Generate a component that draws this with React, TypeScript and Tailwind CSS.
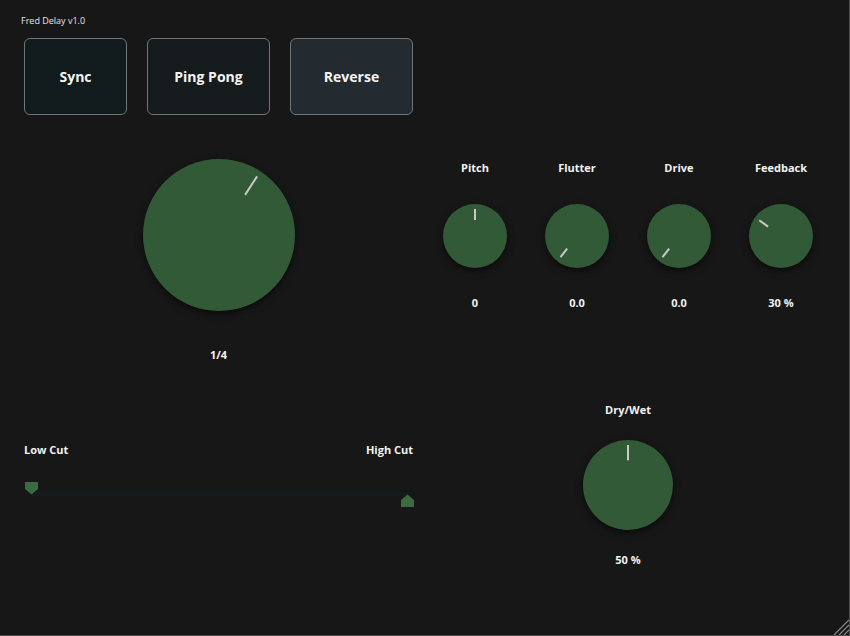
import React from "react";

const FONT = { fontFamily: '"Open Sans", "DejaVu Sans", sans-serif' };

function Knob({ size, angle, r0, r1 }: { size: number; angle: number; r0: number; r1: number }) {
  const c = size / 2;
  const a = (angle * Math.PI) / 180;
  const x1 = c + Math.sin(a) * r0 * c;
  const y1 = c - Math.cos(a) * r0 * c;
  const x2 = c + Math.sin(a) * r1 * c;
  const y2 = c - Math.cos(a) * r1 * c;
  return (
    <div
      className="rounded-full bg-[#335a37] shadow-[0_3px_7px_rgba(0,0,0,0.55)] shrink-0"
      style={{ width: size, height: size }}
    >
      <svg width={size} height={size} className="block">
        <line x1={x1} y1={y1} x2={x2} y2={y2} stroke="#c9c9c9" strokeWidth={2} />
      </svg>
    </div>
  );
}

function SmallKnob({ label, value, angle }: { label: string; value: string; angle: number }) {
  return (
    <div className="w-[102px] flex flex-col items-center">
      <div className="text-[11px] leading-[14px] font-bold text-[#f2f2f2]">{label}</div>
      <div className="mt-[29px]">
        <Knob size={64} angle={angle} r0={0.5} r1={0.84} />
      </div>
      <div className="mt-[28px] text-[11px] leading-[14px] font-bold text-[#f2f2f2]">{value}</div>
    </div>
  );
}

export default function App() {
  return (
    <div
      className="relative w-[850px] h-[636px] bg-[#171717] border-r border-b border-[#4e4e4e] flex flex-col overflow-hidden"
      style={FONT}
    >
      <div className="pt-[15px] pl-[21px] text-[9px] leading-[11px] text-[#e6e6e6]">Fred Delay v1.0</div>
      <div className="mt-[12px] ml-[24px] flex gap-[20px]">
        <div className="w-[103px] h-[77px] rounded-[6px] border border-[#6f7579] bg-[#111a1d] flex items-center justify-center text-[14px] font-bold text-[#f4f4f4]">
          Sync
        </div>
        <div className="w-[123px] h-[77px] rounded-[6px] border border-[#6f7579] bg-[#161b1e] flex items-center justify-center text-[14px] font-bold text-[#f4f4f4]">
          Ping Pong
        </div>
        <div className="w-[123px] h-[77px] rounded-[6px] border border-[#6f7579] bg-[#232a30] flex items-center justify-center text-[14px] font-bold text-[#f4f4f4]">
          Reverse
        </div>
      </div>
      <div className="flex">
        <div className="ml-[24px] w-[389px] flex flex-col">
          <div className="mt-[44px] flex justify-center">
            <Knob size={152} angle={33} r0={0.63} r1={0.92} />
          </div>
          <div className="mt-[37px] text-center text-[11px] leading-[14px] font-bold text-[#f2f2f2]">1/4</div>
          <div className="mt-[81px] flex justify-between text-[11px] leading-[14px] font-bold text-[#f2f2f2]">
            <span>Low Cut</span>
            <span>High Cut</span>
          </div>
          <div className="mt-[25px] relative h-[26px]">
            <div className="absolute left-[8px] right-[3px] top-[10px] h-[4px] bg-[#141b1f]" />
            <svg className="absolute left-[1px] top-0" width="13" height="13">
              <polygon points="0,0 13,0 13,7 6.5,12.5 0,7" fill="#3b6b41" />
            </svg>
            <svg className="absolute left-[377px] top-[12px]" width="13" height="13">
              <polygon points="6.5,0.5 13,6 13,13 0,13 0,6" fill="#3b6b41" />
            </svg>
          </div>
        </div>
        <div className="ml-[11px] w-[408px] flex flex-col">
          <div className="mt-[46px] flex">
            <SmallKnob label="Pitch" value="0" angle={0} />
            <SmallKnob label="Flutter" value="0.0" angle={-142} />
            <SmallKnob label="Drive" value="0.0" angle={-142} />
            <SmallKnob label="Feedback" value="30 %" angle={-54} />
          </div>
          <div className="mt-[93px] flex flex-col items-center">
            <div className="text-[11px] leading-[14px] font-bold text-[#f2f2f2]">Dry/Wet</div>
            <div className="mt-[23px]">
              <Knob size={90} angle={0} r0={0.55} r1={0.89} />
            </div>
            <div className="mt-[23px] text-[11px] leading-[14px] font-bold text-[#f2f2f2]">50 %</div>
          </div>
        </div>
      </div>
      <svg className="absolute right-0 bottom-0" width="18" height="18">
        <line x1="18" y1="3" x2="3" y2="18" stroke="#8a8a8a" strokeWidth="1.2" />
        <line x1="18" y1="8" x2="8" y2="18" stroke="#8a8a8a" strokeWidth="1.2" />
        <line x1="18" y1="13" x2="13" y2="18" stroke="#8a8a8a" strokeWidth="1.2" />
      </svg>
    </div>
  );
}
